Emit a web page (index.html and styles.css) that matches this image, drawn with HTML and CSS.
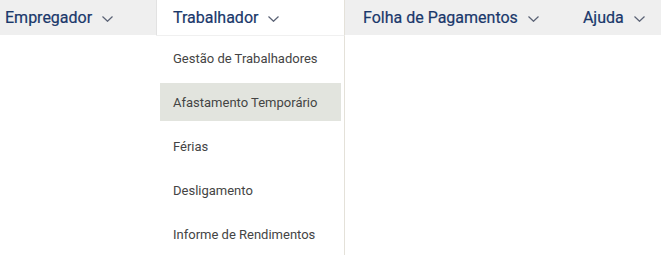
FILE: index.html
```html
<!DOCTYPE html>
<html lang="pt">
<head>
<meta charset="utf-8">
<link rel="stylesheet" href="styles.css">
</head>
<body>
<nav class="nav">
  <div class="nav-item first"><span class="label">Empregador</span><svg class="chev" viewBox="0 0 11 6" width="11" height="6"><path d="M0.5 0.5 L5.5 5.3 L10.5 0.5" fill="none" stroke="#5a6275" stroke-width="1.2"/></svg></div>
  <div class="nav-item open"><span class="label">Trabalhador</span><svg class="chev" viewBox="0 0 11 6" width="11" height="6"><path d="M0.5 0.5 L5.5 5.3 L10.5 0.5" fill="none" stroke="#5a6275" stroke-width="1.2"/></svg>
    <div class="dropdown">
      <div class="dd-item">Gestão de Trabalhadores</div>
      <div class="dd-item active">Afastamento Temporário</div>
      <div class="dd-item">Férias</div>
      <div class="dd-item">Desligamento</div>
      <div class="dd-item">Informe de Rendimentos</div>
    </div>
  </div>
  <div class="nav-item"><span class="label">Folha de Pagamentos</span><svg class="chev" viewBox="0 0 11 6" width="11" height="6"><path d="M0.5 0.5 L5.5 5.3 L10.5 0.5" fill="none" stroke="#5a6275" stroke-width="1.2"/></svg></div>
  <div class="nav-item"><span class="label">Ajuda</span><svg class="chev" viewBox="0 0 11 6" width="11" height="6"><path d="M0.5 0.5 L5.5 5.3 L10.5 0.5" fill="none" stroke="#5a6275" stroke-width="1.2"/></svg></div>
</nav>
</body>
</html>
```

FILE: styles.css
```css
html, body {
  margin: 0;
  padding: 0;
  background: #ffffff;
  font-family: Roboto, "Liberation Sans", sans-serif;
}
body {
  min-height: 255px;
  overflow: hidden;
}
.nav {
  display: flex;
  height: 35px;
  background: #efefef;
  white-space: nowrap;
  position: relative;
  z-index: 1;
}
.nav-item {
  display: flex;
  flex-shrink: 0;
  align-items: center;
  gap: 10px;
  padding: 0 26px 0 18px;
  height: 35px;
  box-sizing: border-box;
  position: relative;
}
.nav-item.first {
  width: 156px;
  padding-left: 5px;
  padding-right: 0;
}
.label {
  font-size: 16px;
  color: #1a386b;
  -webkit-text-stroke: 0.2px #1a386b;
}
.chev {
  display: block;
  margin-top: 2px;
}
.nav-item.open {
  width: 189px;
  padding-left: 16px;
  padding-right: 0;
  background: #ffffff;
  border-left: 1px solid #e2e2e2;
  border-right: 1px solid #e4e1d9;
}
.dropdown {
  position: absolute;
  top: 35px;
  left: -1px;
  width: 189px;
  height: 220px;
  padding: 3px 3px 0 4px;
  box-sizing: border-box;
  background: #ffffff;
  border-top: 1px solid #f0f0f0;
  border-right: 1px solid #e4e1d9;
  display: flex;
  flex-direction: column;
  gap: 6px;
  z-index: 5;
}
.dd-item {
  height: 38px;
  flex-shrink: 0;
  display: flex;
  align-items: center;
  padding-left: 13px;
  font-size: 13px;
  color: #444444;
}
.dd-item.active {
  background: #e2e4de;
}
```
